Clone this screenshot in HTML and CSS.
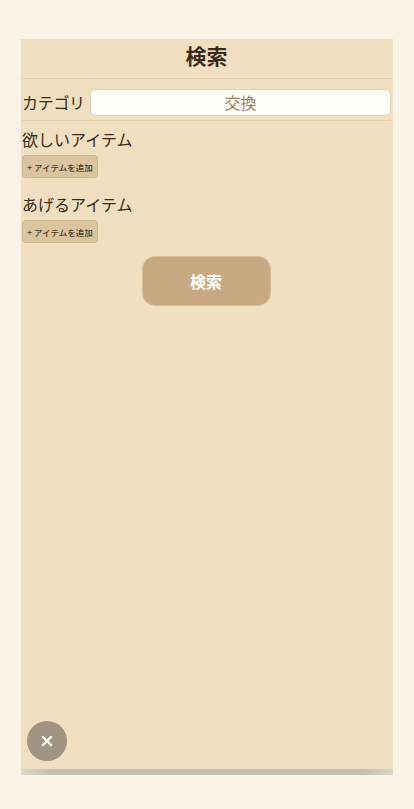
FILE: index.html
```html
<!DOCTYPE html>
<html lang="ja">
<head>
<meta charset="utf-8">
<link rel="stylesheet" href="styles.css">
</head>
<body>
<div class="page">
  <div class="panel">
    <header class="header"><h1 class="title">検索</h1></header>
    <div class="category-row">
      <span class="label">カテゴリ</span>
      <div class="select">交換</div>
    </div>
    <section class="group">
      <h2 class="group-title">欲しいアイテム</h2>
      <button class="add-btn">+ アイテムを追加</button>
    </section>
    <section class="group">
      <h2 class="group-title">あげるアイテム</h2>
      <button class="add-btn">+ アイテムを追加</button>
    </section>
    <div class="search-wrap"><button class="search-btn">検索</button></div>
    <button class="close-btn" aria-label="閉じる">
      <svg width="12" height="12" viewBox="0 0 12 12"><path d="M2 2L10 10M10 2L2 10" stroke="#fff" stroke-width="2.4" stroke-linecap="round"/></svg>
    </button>
  </div>
  <div class="shadow-bar"></div>
</div>
</body>
</html>
```
FILE: styles.css
```css
* { box-sizing: border-box; }
html, body { margin: 0; padding: 0; }
body {
  background: #faf2e6;
  font-family: "Noto Sans CJK JP", "Noto Sans", sans-serif;
  color: #3b2a17;
}
.page {
  padding: 39px 21px 0;
}
.panel {
  position: relative;
  background: #f1dfc2;
  height: 730px;
  padding: 0 2px 0 1px;
}
.header {
  height: 40px;
  border-bottom: 1px solid #e5d0ae;
  display: flex;
  align-items: center;
  justify-content: center;
  padding-bottom: 6px;
}
.title {
  margin: 0;
  font-size: 21px;
  font-weight: 700;
  line-height: 1;
  color: #3b2a17;
}
.category-row {
  height: 42px;
  display: flex;
  align-items: center;
  gap: 6px;
  border-bottom: 1px solid #e5d0ae;
  padding-top: 5px;
}
.label {
  font-size: 16px;
  width: 62px;
  white-space: nowrap;
  flex: none;
  letter-spacing: -0.3px;
}
.select {
  flex: 1;
  height: 27px;
  background: #fffdf8;
  border: 1px solid #ddd0bd;
  border-radius: 5px;
  display: flex;
  align-items: center;
  justify-content: center;
  font-size: 16px;
  color: #9c7d5c;
}
.group {
  padding-top: 7px;
  padding-bottom: 8px;
}
.group-title {
  margin: 0;
  font-size: 16px;
  font-weight: 400;
  line-height: 23px;
  color: #3b2a17;
}
.add-btn {
  margin-top: 4px;
  width: 76px;
  height: 23px;
  background: #dcc59e;
  border: 1px solid #cdb58c;
  border-radius: 4px;
  font-family: inherit;
  font-size: 8.5px;
  font-weight: 500;
  color: #4a3722;
  padding: 0;
  display: flex;
  align-items: center;
  justify-content: center;
}
.search-wrap {
  display: flex;
  justify-content: center;
  padding-top: 5px;
  padding-right: 1px;
}
.search-btn {
  width: 129px;
  height: 50px;
  background: #c9a981;
  border: 1px solid #d8bc96;
  border-radius: 13px;
  color: #fff;
  font-family: inherit;
  font-size: 16px;
  font-weight: 700;
}
.close-btn {
  position: absolute;
  left: 6px;
  bottom: 8px;
  width: 40px;
  height: 40px;
  border-radius: 50%;
  background: #a09482;
  border: none;
  display: flex;
  align-items: center;
  justify-content: center;
  padding: 0;
}
.shadow-bar {
  height: 6px;
  background: linear-gradient(to right, #ddd6cb 0%, #c3beb2 8%, #c3beb2 92%, #ddd6cb 100%);
}
```
